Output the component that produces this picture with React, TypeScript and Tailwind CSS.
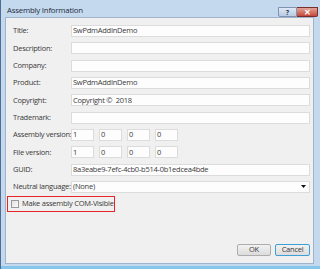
import React from "react";

const font = { fontFamily: '"Open Sans", "Noto Sans", sans-serif' };
const txt = "text-[7.5px] leading-none tracking-[-0.25px] text-[#3a3a3a]";

const Field: React.FC<{ value?: string; w?: string }> = ({ value = "", w = "flex-1" }) => (
  <div className={`${w} h-[12px] bg-[#fdfdfd] border border-[#dcdcdc] flex items-center px-[1px] ${txt} overflow-hidden whitespace-pre`}>
    {value}
  </div>
);

const Row: React.FC<{ label: string; children: React.ReactNode }> = ({ label, children }) => (
  <div className="flex items-center h-[12px]">
    <div className={`w-[58px] shrink-0 whitespace-nowrap ${txt}`}>{label}</div>
    <div className="flex-1 flex items-center gap-[5px]">{children}</div>
  </div>
);

const Version: React.FC<{ parts: string[] }> = ({ parts }) => (
  <>
    {parts.map((p, i) => (
      <Field key={i} value={p} w="w-[23px]" />
    ))}
  </>
);

export default function App() {
  return (
    <div className="w-[320px] h-[269px] flex bg-[#c4d9ee] overflow-hidden" style={font}>
      <div className="w-[1px] bg-[#4f6c95]" />
      <div className="flex-1 flex flex-col pl-[4px] pr-[6px] pb-[2px] border-b-[3px] border-[#86c6ea]">
        <div className="h-[17px] shrink-0 flex items-end justify-between">
          <div className="pl-[2px] pb-[2px] text-[7.8px] leading-none tracking-[-0.2px] text-[#1f2a3a]">Assembly Information</div>
          <div className="flex h-[10px] mr-[-4px]">
            <div className="w-[19px] h-full border border-[#7d93b0] rounded-bl-[2px] bg-gradient-to-b from-[#dfe9f5] to-[#b7cbe3] flex items-center justify-center text-[7px] leading-none font-bold text-[#2c3e57]">
              ?
            </div>
            <div className="w-[21px] h-full border border-l-0 border-[#7a2f2a] rounded-br-[2px] bg-gradient-to-b from-[#e0a396] to-[#c4463a] flex items-center justify-center text-[8px] leading-none font-bold text-white">
              ✕
            </div>
          </div>
        </div>
        <div className="flex-1 bg-[#f0f0f0] border border-[#9fb4cc] flex flex-col pl-[7px] pr-[3px] pt-[7px] pb-[7px]">
          <div className="flex flex-col gap-[5.33px]">
            <Row label="Title:"><Field value="SwPdmAddInDemo" /></Row>
            <Row label="Description:"><Field /></Row>
            <Row label="Company:"><Field /></Row>
            <Row label="Product:"><Field value="SwPdmAddInDemo" /></Row>
            <Row label="Copyright:"><Field value="Copyright ©  2018" /></Row>
            <Row label="Trademark:"><Field /></Row>
            <Row label="Assembly version:"><Version parts={["1", "0", "0", "0"]} /></Row>
            <Row label="File version:"><Version parts={["1", "0", "0", "0"]} /></Row>
            <Row label="GUID:"><Field value="8a3eabe9-7efc-4cb0-b514-0b1edcea4bde" /></Row>
            <Row label="Neutral language:">
              <div className={`flex-1 h-[12px] bg-[#fdfdfd] border border-[#dcdcdc] flex items-center justify-between px-[1px] ${txt}`}>
                <span>(None)</span>
                <svg width="5" height="3" viewBox="0 0 5 3" className="mr-[2px]">
                  <path d="M0 0H5L2.5 3Z" fill="#111" />
                </svg>
              </div>
            </Row>
          </div>
          <div className="mt-[3px] ml-[-6px] w-[108px] h-[16px] border border-[#e8262a] flex items-center pl-[3px] gap-[3px]">
            <div className="w-[8px] h-[8px] shrink-0 border border-[#9a9a9a] bg-gradient-to-br from-[#e2e2e2] to-[#fafafa]" />
            <span className={`whitespace-nowrap ${txt}`}>Make assembly COM-Visible</span>
          </div>
          <div className="flex-1" />
          <div className="flex justify-end gap-[4px]">
            <div className={`w-[34px] h-[12px] border border-[#adadad] rounded-[2px] bg-gradient-to-b from-[#f2f2f2] to-[#dcdcdc] flex items-center justify-center ${txt}`}>
              OK
            </div>
            <div className={`w-[35px] h-[12px] border border-[#3c9fd6] rounded-[2px] bg-gradient-to-b from-[#f2f2f2] to-[#dcdcdc] flex items-center justify-center ${txt}`}>
              Cancel
            </div>
          </div>
        </div>
      </div>
    </div>
  );
}
